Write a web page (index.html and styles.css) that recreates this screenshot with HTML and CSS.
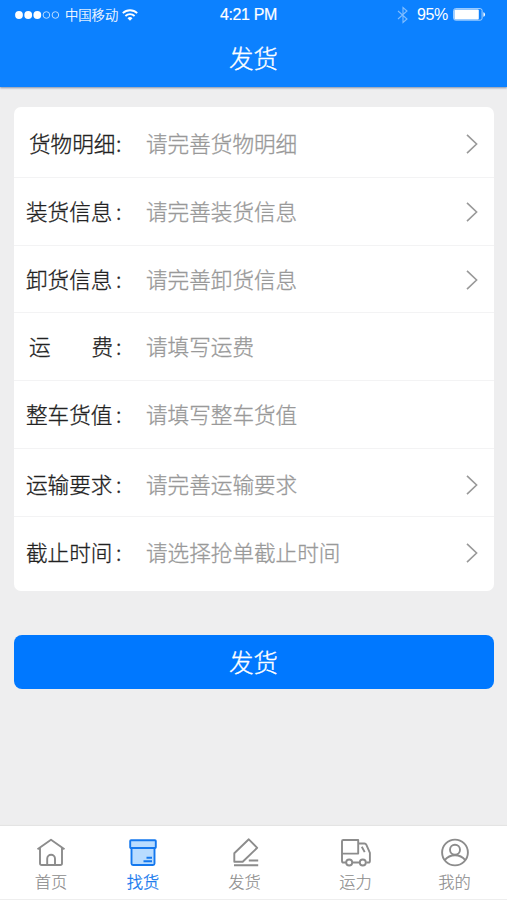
FILE: index.html
```html
<!DOCTYPE html>
<html lang="zh-CN">
<head>
<meta charset="utf-8">
<title>发货</title>
<link rel="stylesheet" href="styles.css">
</head>
<body>
<div class="app">
  <header class="header">
    <div class="status">
      <div class="status-left">
        <svg class="signal" width="46" height="10" viewBox="0 0 46 10"><g fill="#fff"><circle cx="4" cy="5" r="3.9"/><circle cx="13.2" cy="5" r="3.9"/><circle cx="22.3" cy="5" r="3.9"/></g><g fill="none" stroke="#b9dcff" stroke-width="1"><circle cx="31.4" cy="5" r="3.3"/><circle cx="40.4" cy="5" r="3.3"/></g></svg>
        <span class="carrier">中国移动</span>
        <svg class="wifi" width="16" height="12" viewBox="0 0 16 12" fill="none" stroke="#fff" stroke-width="1.8"><path d="M.8 4.200a10.300 10.300 0 0 1 14.400 0M3.400 7a6.600 6.600 0 0 1 9.200 0"/><path d="M8 11.800 5.500 9.200a3.600 3.600 0 0 1 5 0z" fill="#fff" stroke="none"/></svg>
      </div>
      <span class="clock">4:21 PM</span>
      <div class="status-right">
        <svg class="bluetooth" width="12" height="18" viewBox="0 0 12 18" fill="none" stroke="#80bdff" stroke-width="1.1"><path d="m1 5 9 8-4 3.500v-15L10 5l-9 8"/></svg>
        <span class="percent">95%</span>
        <svg class="battery" width="33" height="13" viewBox="0 0 33 13"><rect x=".6" y=".6" width="28.5" height="11.6" rx="2" fill="none" stroke="#a9d3ff"/><rect x="1.400" y="1.400" width="24.400" height="10" rx="1" fill="#fff"/><path d="M30.400 4.200c2.200.7 2.200 3.900 0 4.600z" fill="#fff"/></svg>
      </div>
    </div>
    <h1 class="title">发货</h1>
  </header>
  <main class="main">
    <section class="card">
      <div class="row row-first"><span class="label label-inset"><span>货物明细</span></span><span class="colon">:</span><span class="hint">请完善货物明细</span><svg class="chevron" viewBox="0 0 12 20"><path d="m1 .8 9.600 9.200L1 19.200"/></svg></div>
      <div class="row row-load"><span class="label"><span>装货信息</span></span><span class="colon">:</span><span class="hint">请完善装货信息</span><svg class="chevron" viewBox="0 0 12 20"><path d="m1 .8 9.600 9.200L1 19.200"/></svg></div>
      <div class="row row-unload"><span class="label"><span>卸货信息</span></span><span class="colon">:</span><span class="hint">请完善卸货信息</span><svg class="chevron" viewBox="0 0 12 20"><path d="m1 .8 9.600 9.200L1 19.200"/></svg></div>
      <div class="row"><span class="label label-spread"><span>运</span><span>费</span></span><span class="colon">:</span><span class="hint">请填写运费</span></div>
      <div class="row"><span class="label"><span>整车货值</span></span><span class="colon">:</span><span class="hint">请填写整车货值</span></div>
      <div class="row row-transport"><span class="label"><span>运输要求</span></span><span class="colon">:</span><span class="hint">请完善运输要求</span><svg class="chevron" viewBox="0 0 12 20"><path d="m1 .8 9.600 9.200L1 19.200"/></svg></div>
      <div class="row row-last"><span class="label"><span>截止时间</span></span><span class="colon">:</span><span class="hint">请选择抢单截止时间</span><svg class="chevron" viewBox="0 0 12 20"><path d="m1 .8 9.600 9.200L1 19.200"/></svg></div>
    </section>
    <button class="submit">发货</button>
  </main>
  <nav class="tabs">
    <a class="tab"><svg width="30" height="30" viewBox="0 0 30 30"><path d="M1.500 12.200 15 2.700l13.500 9.500M4 11v15.200q0 1.800 1.800 1.800h18.400q1.800 0 1.800-1.800V11M11.200 28v-6.300a3.900 3.900 0 0 1 7.800 0V28"/></svg><span>首页</span></a>
    <a class="tab tab-active"><svg width="30" height="30" viewBox="0 0 30 30"><g fill="#b9dcff"><path d="M3.500 11h23v15.500q0 1.500-1.500 1.500H5q-1.500 0-1.500-1.500z"/><rect x="2.200" y="3.200" width="25.600" height="7.800" rx=".8"/></g><path d="M18.500 20.800h5.500M15.500 24.200h8.500"/></svg><span>找货</span></a>
    <a class="tab"><svg width="30" height="30" viewBox="0 0 30 30"><path d="M4.300 24.800v-8.600L18.800 2.300l8.400 8.500-14.500 14zM18.800 23.500h9.400M4 28.200h24.200"/></svg><span>发货</span></a>
    <a class="tab"><svg width="32" height="30" viewBox="0 0 32 30"><path d="M6 25.500H3.600q-1.600 0-1.600-1.600V4.300q0-1.300 1.300-1.300h14.900v13.600H2M18.200 6.500h6.200q1.400 0 2 1.400l3.500 8v8q0 1.600-1.600 1.600h-2M12.400 25.500h7.200M21.800 9.700l2.900 5.400"/><circle cx="9.200" cy="25.500" r="3"/><circle cx="22.800" cy="25.500" r="3"/></svg><span>运力</span></a>
    <a class="tab"><svg width="30" height="30" viewBox="0 0 30 30"><circle cx="15" cy="15.500" r="12.900"/><circle cx="15" cy="12.700" r="5"/><path d="M4.700 23.200a13.200 13.200 0 0 1 20.600 0"/></svg><span>我的</span></a>
  </nav>
</div>
</body>
</html>
```
FILE: styles.css
```css
* { box-sizing: border-box; }
body {
  margin: 0;
  background: #eeeeef;
  font-family: "Liberation Sans", "Noto Sans CJK SC", sans-serif;
}
.app { display: flex; flex-direction: column; height: 900px; }

.header {
  flex: none;
  height: 87px;
  background: #0c81ff;
  color: #fff;
  box-shadow: 0 1px 2px rgba(0, 30, 80, .45);
}
.status {
  display: grid;
  grid-template-columns: 1fr auto 1fr;
  align-items: center;
  height: 29px;
  padding: 0 21px 0 15px;
}
.status-left, .status-right { display: flex; align-items: center; }
.status-right { justify-content: flex-end; }
.signal { margin-right: 4px; }
.carrier { width: 53px; font: 300 13.300px/20px "Noto Sans CJK SC", sans-serif; white-space: nowrap; -webkit-text-stroke: .2px currentColor; }
.wifi { margin-left: 4px; }
.clock { margin-right: 4px; font-size: 16px; line-height: 20px; letter-spacing: -.35px; -webkit-text-stroke: .2px #fff; }
.bluetooth { margin-right: 8px; }
.percent { font-size: 16px; line-height: 20px; letter-spacing: -.3px; margin-right: 5px; }
.title {
  margin: 11px 0 0;
  text-align: center;
  font: 300 24.500px/36px "Noto Sans CJK SC", sans-serif;
  -webkit-text-stroke: .35px currentColor;
}

.main { flex: 1; padding: 20px 13px 0 14px; }
.card {
  height: 484px;
  overflow: hidden;
  border-radius: 7px;
  background: #fff;
}
.row {
  display: flex;
  align-items: center;
  height: 68px;
  padding: 0 16px 0 12px;
  border-bottom: 1px solid #f3f3f4;
  font: 300 21.600px/30px "Noto Sans CJK SC", sans-serif;
  -webkit-text-stroke: .3px currentColor;
}
.row > span { padding-bottom: 2px; }
.row-first { height: 71px; padding-top: 4px; }
.row-load { padding-top: 1px; }
.row-unload { height: 67px; padding-top: 1px; }
.row-transport { padding-top: 4px; }
.row-last { height: 74px; border-bottom: 0; padding-bottom: 2px; }
.label { display: flex; width: 88px; color: #222; white-space: nowrap; }
.label-inset { padding-left: 3px; }
.label-spread { justify-content: space-between; padding: 0 1px 0 3px; }
.colon { width: 32px; padding-left: 2px; color: #222; }
.hint { flex: 1; color: #999; }
.chevron { width: 12px; height: 20px; fill: none; stroke: #999; stroke-width: 1.600; }

.submit {
  display: block;
  width: 480px;
  height: 54px;
  margin: 44px 0 0 -.5px;
  padding: 0 0 1px;
  border: 0;
  border-radius: 8px;
  background: #0078ff;
  color: #fff;
  font: 300 24.500px/36px "Noto Sans CJK SC", sans-serif;
  -webkit-text-stroke: .35px currentColor;
}

.tabs {
  flex: none;
  display: grid;
  grid-template-columns: 102px 82px 121px 101px 97px;
  height: 74px;
  padding-top: 11px;
  background: #fff;
  border-bottom: 1px solid #eee;
  box-shadow: 0 -1px 1px #e4e4e4;
}
.tab {
  display: flex;
  flex-direction: column;
  align-items: center;
  color: #8c8c8c;
  font: 300 16.300px/24px "Noto Sans CJK SC", sans-serif;
  -webkit-text-stroke: .15px currentColor;
}
.tab svg { flex: none; margin-bottom: 2px; fill: none; stroke: currentColor; stroke-width: 1.900; stroke-linejoin: round; }
.tab-active { color: #1478ee; -webkit-text-stroke-width: .3px; }
```
